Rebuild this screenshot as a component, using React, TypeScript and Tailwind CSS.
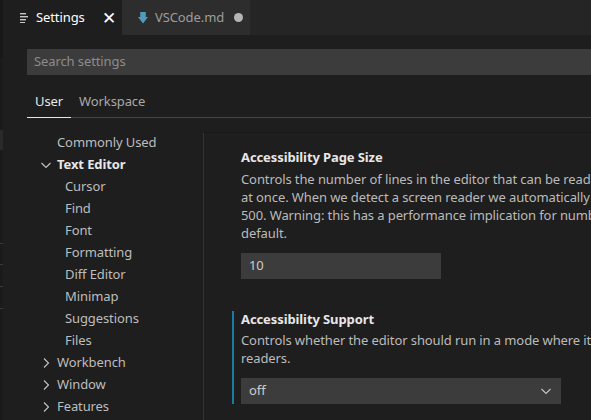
const font = "font-['Noto_Sans',sans-serif]";

function SettingsIcon() {
  return (
    <svg width="9" height="11" viewBox="0 0 9 11" className="shrink-0">
      <rect x="0" y="1" width="6" height="1.4" fill="#c5c5c5" />
      <rect x="0" y="4" width="8" height="1.4" fill="#c5c5c5" />
      <rect x="0" y="7" width="6" height="1.4" fill="#c5c5c5" />
      <rect x="0" y="10" width="5" height="1" fill="#c5c5c5" />
    </svg>
  );
}

function MarkdownIcon() {
  return (
    <svg width="10" height="12" viewBox="0 0 10 12" className="shrink-0">
      <path d="M2.2 0 H7.8 V5 H10 L5 11.5 L0 5 H2.2 Z" fill="#519aba" />
    </svg>
  );
}

function Chevron({ dir, className }: { dir: 'down' | 'right'; className?: string }) {
  return (
    <svg width="12" height="12" viewBox="0 0 12 12" className={className}>
      {dir === 'down' ? (
        <path d="M1.5 4 L6 8.5 L10.5 4" fill="none" stroke="#c5c5c5" strokeWidth="1.1" />
      ) : (
        <path d="M4 1.5 L8.5 6 L4 10.5" fill="none" stroke="#c5c5c5" strokeWidth="1.1" />
      )}
    </svg>
  );
}

const toc: { label: string; level: number; chevron?: 'down' | 'right'; bold?: boolean }[] = [
  { label: 'Commonly Used', level: 0 },
  { label: 'Text Editor', level: 0, chevron: 'down', bold: true },
  { label: 'Cursor', level: 1 },
  { label: 'Find', level: 1 },
  { label: 'Font', level: 1 },
  { label: 'Formatting', level: 1 },
  { label: 'Diff Editor', level: 1 },
  { label: 'Minimap', level: 1 },
  { label: 'Suggestions', level: 1 },
  { label: 'Files', level: 1 },
  { label: 'Workbench', level: 0, chevron: 'right' },
  { label: 'Window', level: 0, chevron: 'right' },
  { label: 'Features', level: 0, chevron: 'right' },
];

export default function App() {
  return (
    <div className={`w-[591px] h-[420px] overflow-hidden bg-[#1e1e1e] flex ${font} text-[13px] tracking-[-0.1px]`}>
      {/* edge of the neighbouring pane */}
      <div className="w-[3px] shrink-0 flex flex-col bg-[#1b1b1b]">
        <div className="h-[58px] bg-[#181818]" />
        <div className="h-[72px]" />
        <div className="h-[20px] bg-[#2a2a2a]" />
        <div className="h-[93px]" />
        <div className="h-px bg-[#3a3a3a]" />
        <div className="h-[20px]" />
        <div className="h-px bg-[#3a3a3a]" />
        <div className="h-[21px]" />
        <div className="h-px bg-[#3a3a3a]" />
        <div className="h-[21px]" />
        <div className="h-px bg-[#3a3a3a]" />
      </div>

      <div className="flex-1 min-w-0 flex flex-col">
        {/* tab bar */}
        <div className="h-[35px] shrink-0 flex bg-[#252526]">
          <div className="w-[119px] bg-[#1e1e1e] flex items-center pl-[17px]">
            <SettingsIcon />
            <span className="ml-[7px] text-white">Settings</span>
            <span className="ml-auto mr-[6px] text-white text-[17px] leading-none font-light">✕</span>
          </div>
          <div className="w-[128px] bg-[#2d2d2d] flex items-center pl-[16px]">
            <MarkdownIcon />
            <span className="ml-[7px] text-[#9d9d9d]">VSCode.md</span>
            <span className="ml-[10px] w-[9px] h-[9px] rounded-full bg-[#b5b5b5]" />
          </div>
        </div>

        <div className="flex-1 min-h-0 flex flex-col pl-[24px]">
          {/* search */}
          <div className="mt-[14px] h-[26px] shrink-0 bg-[#3c3c3c] flex items-center pl-[7px] -mr-[20px]">
            <span className="text-[#8c8c8c]">Search settings</span>
          </div>

          {/* user / workspace tabs */}
          <div className="mt-[12px] h-[31px] shrink-0 flex border-b border-[#474747] -mr-[20px]">
            <div className="px-[8px] flex items-center text-[#e7e7e7] border-b border-[#e7e7e7] -mb-px">User</div>
            <div className="px-[8px] flex items-center text-[#a9a9a9]">Workspace</div>
          </div>

          <div className="mt-[14px] flex-1 min-h-0 flex">
            {/* table of contents */}
            <div className="w-[176px] shrink-0 flex flex-col">
              {toc.map((item) => (
                <div key={item.label} className="h-[22px] flex items-center">
                  <div className={item.level === 1 ? 'w-[38px] shrink-0' : 'w-[30px] shrink-0 flex justify-end pr-[5px]'}>
                    {item.level === 0 && item.chevron && <Chevron dir={item.chevron} />}
                  </div>
                  <span className={item.bold ? 'font-bold text-[#e7e7e7]' : 'text-[#bdbdbd]'}>{item.label}</span>
                </div>
              ))}
            </div>

            {/* settings list */}
            <div className="flex-1 min-w-0 border-l border-[#333333] border-t border-t-[#171717] pl-[28px] pt-[16px] whitespace-nowrap">
              <div className="border-l-2 border-transparent pl-[7px]">
                <div className="leading-[16px] font-bold text-[#e7e7e7]">Accessibility Page Size</div>
                <div className="mt-[5px] leading-[18px] text-[#bbbbbb]">
                  <div>Controls the number of lines in the editor that can be read out by a screen reader</div>
                  <div>at once. When we detect a screen reader we automatically set the default to</div>
                  <div>500. Warning: this has a performance implication for numbers larger than the</div>
                  <div>default.</div>
                </div>
                <div className="mt-[11px] w-[200px] h-[26px] bg-[#3c3c3c] flex items-center pl-[8px] text-[#cccccc]">10</div>
              </div>

              <div className="mt-[32px] border-l-2 border-[#1c7aa0] pl-[7px]">
                <div className="leading-[16px] font-bold text-[#e7e7e7]">Accessibility Support</div>
                <div className="mt-[4px] leading-[18px] text-[#bbbbbb]">
                  <div>Controls whether the editor should run in a mode where it is optimized for screen</div>
                  <div>readers.</div>
                </div>
                <div className="mt-[11px] w-[320px] h-[26px] bg-[#3c3c3c] flex items-center pl-[8px] pr-[9px] text-[#cccccc]">
                  <span>off</span>
                  <Chevron dir="down" className="ml-auto" />
                </div>
              </div>
            </div>
          </div>
        </div>
      </div>
    </div>
  );
}
